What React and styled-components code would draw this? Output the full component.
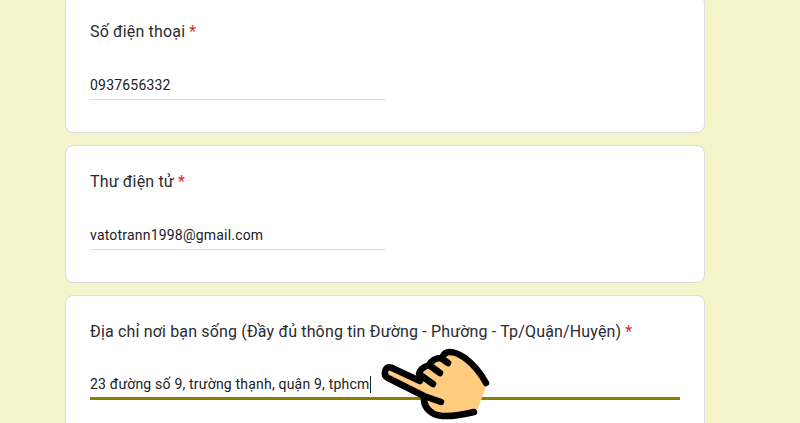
import React from "react";
import styled, { createGlobalStyle } from "styled-components";

const Global = createGlobalStyle`
  html, body { margin: 0; padding: 0; height: 423px; overflow: hidden; background: #f5f4cb; }
  #root { height: 423px; overflow: hidden; }
`;

const Page = styled.main`
  position: relative;
  width: 800px;
  height: 423px;
  overflow: hidden;
  background: #f5f4cb;
`;

const Column = styled.div`
  display: flex;
  flex-direction: column;
  gap: 12px;
  width: 640px;
  margin: -5px 0 0 65px;
`;

const Card = styled.section`
  box-sizing: border-box;
  height: 138px;
  flex: none;
  padding: 24px 24px 32px;
  background: #fff;
  border: 1px solid #dadce0;
  border-radius: 8px;
`;

const Label = styled.div`
  font-family: Roboto, "Liberation Sans", sans-serif;
  font-size: 16px;
  line-height: 24px;
  letter-spacing: 0.16px;
  color: #2a2b2e;
`;

const Required = styled.span`
  color: #d93025;
  margin-left: 4px;
`;

const Field = styled.div`
  box-sizing: border-box;
  display: flex;
  align-items: center;
  width: ${(p) => (p.$wide ? "590px" : "295px")};
  height: 32px;
  margin-top: 24px;
  padding-top: ${(p) => (p.$active ? "3px" : "2px")};
  border-bottom: ${(p) => (p.$active ? "3px solid #8a8000" : "1px solid #dadce0")};
  font-family: Roboto, "Liberation Sans", sans-serif;
  font-size: 14px;
  letter-spacing: 0.2px;
  color: #202124;
`;

const Caret = styled.span`
  display: inline-block;
  width: 1px;
  height: 17px;
  background: #202124;
  margin-left: 1px;
`;

const Hand = styled.svg`
  position: absolute;
  left: 375px;
  top: 340px;
  width: 120px;
  height: 83px;
`;

const HandIcon = () => (
  <Hand viewBox="375 340 120 83" aria-hidden="true">
    <path
      d="M389 370L418 382L420 373L428 364L443 354L452 352L465 358L478 370L487 384L477 411L457 416L437 416L426 408L423 397L388 376Z"
      fill="#ffcc80"
    />
    <g fill="none" stroke="#000" strokeWidth="6.5" strokeLinecap="round" strokeLinejoin="round">
      <path d="M433 384L419 374Q420 368 429 365L440 373M429 365Q433 358 441 358L448 363M442 358Q444 352 450 352Q456 352 465 358Q478 368 486 383" />
      <path d="M420 381L391 367.5Q386 366 385 372Q384 376 388 378L424 396L441 402" />
      <path d="M424 397Q423 408 434 414Q445 419 474 412" />
    </g>
  </Hand>
);

const questions = [
  { label: "Số điện thoại", value: "0937656332" },
  { label: "Thư điện tử", value: "vatotrann1998@gmail.com" },
  {
    label: "Địa chỉ nơi bạn sống (Đầy đủ thông tin Đường - Phường - Tp/Quận/Huyện)",
    value: "23 đường số 9, trường thạnh, quận 9, tphcm",
    active: true,
  },
];

export default function App() {
  return (
    <Page>
      <Global />
      <Column>
        {questions.map((q) => (
          <Card key={q.label}>
            <Label>
              {q.label}
              <Required>*</Required>
            </Label>
            <Field $wide={q.active} $active={q.active}>
              {q.value}
              {q.active && <Caret />}
            </Field>
          </Card>
        ))}
      </Column>
      <HandIcon />
    </Page>
  );
}
